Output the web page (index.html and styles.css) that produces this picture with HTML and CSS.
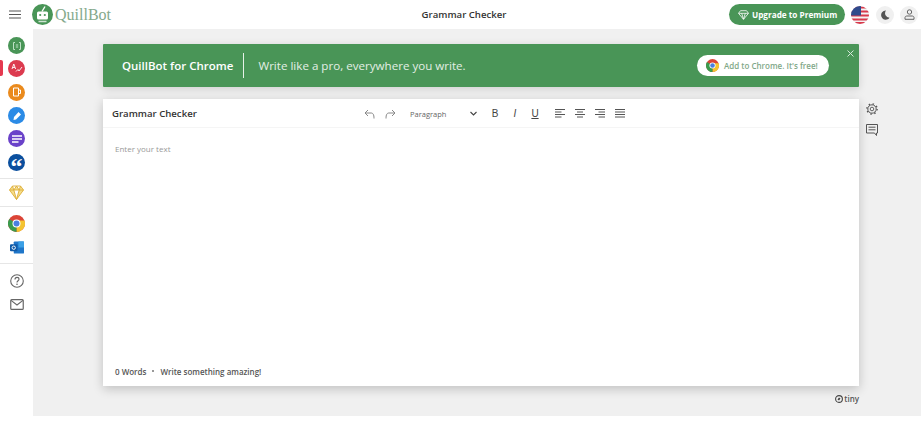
FILE: index.html
```html
<!DOCTYPE html>
<html lang="en">
<head>
    <meta charset="UTF-8">
    <title>Grammar Checker</title>
    <link rel="stylesheet" href="styles.css">
</head>
<body>
    <header class="topbar">
        <div class="brand">
            <svg class="hamburger" width="12" height="9" viewBox="0 0 12 9"><path d="M0 1h12M0 4.500h12M0 8h12" stroke="#555" stroke-width="1.200"/></svg>
            <svg class="logo" width="21" height="21" viewBox="0 0 21 21">
                <circle cx="10.500" cy="10.500" r="10.500" fill="#499557"/>
                <rect x="5" y="7.500" width="11" height="8" rx="1.500" fill="#fff"/>
                <circle cx="8.200" cy="11" r="1.100" fill="#499557"/>
                <circle cx="12.800" cy="11" r="1.100" fill="#499557"/>
                <path d="M10 7.500 13 2.500" stroke="#fff" stroke-width="1.400"/>
                <path d="M6.500 17.500h8" stroke="#cfe3d3" stroke-width="1.500"/>
            </svg>
            <span class="logo-text">QuillBot</span>
        </div>
        <div class="page-title">Grammar Checker</div>
        <div class="top-actions">
            <div class="upgrade">
                <svg width="11" height="10" viewBox="0 0 11 10"><path d="M2.500.700h6l2 2.600-5 6-5-6zM.600 3.300h9.800M3.700 3.300l1.800 6 1.800-6" fill="none" stroke="#fff" stroke-width=".800"/></svg>
                <span>Upgrade to Premium</span>
            </div>
            <svg class="flag" width="18" height="18" viewBox="0 0 18 18">
                <defs><clipPath id="flagclip"><circle cx="9" cy="9" r="9"/></clipPath></defs>
                <g clip-path="url(#flagclip)">
                    <rect width="18" height="18" fill="#f3f3f3"/>
                    <path d="M0 1.500h18M0 5.500h18M0 9.500h18M0 13.500h18M0 17h18" stroke="#d8394c" stroke-width="2"/>
                    <rect width="10" height="9.500" fill="#2f4a8c"/>
                </g>
            </svg>
            <div class="round-btn">
                <svg width="10" height="10" viewBox="0 0 10 10"><path d="M6 .500a4.600 4.600 0 1 0 3.500 7.200A4.500 4.500 0 0 1 6 .500z" fill="#555"/></svg>
            </div>
            <div class="round-btn">
                <svg width="11" height="11" viewBox="0 0 11 11"><circle cx="5.500" cy="3" r="2.200" fill="none" stroke="#666"/><path d="M1 10.300V8.500c0-1 1-1.500 2-1.500h5c1 0 2 .5 2 1.500v1.800z" fill="none" stroke="#666"/></svg>
            </div>
        </div>
    </header>

    <div class="layout">
        <aside class="sidebar">
            <div class="side-group first">
                <div class="side-item"><span class="dot green"><svg width="10" height="10" viewBox="0 0 10 10"><path d="M3 1.500H1.500v7H3M7 1.500h1.500v7H7M3.800 4h2.400M3.800 6h2.400" fill="none" stroke="#bfe0c6"/></svg></span></div>
                <div class="side-item active"><span class="dot red"><svg width="12" height="11" viewBox="0 0 12 11"><path d="M1 6 2.800 1 4.600 6M1.700 4.500h2.200M5 8.500 7 6.500 8 8 11 4" fill="none" stroke="#fff" stroke-width=".900"/></svg></span></div>
                <div class="side-item"><span class="dot orange"><svg width="10" height="10" viewBox="0 0 10 10"><path d="M1.500 1h5v8h-5zM6.500 3h2v3.500h-2" fill="none" stroke="#fff" stroke-width="1"/></svg></span></div>
                <div class="side-item"><span class="dot blue"><svg width="10" height="10" viewBox="0 0 10 10"><path d="M6.500 1 9 3.500 4 8.500 1.500 9 2 6z" fill="#fff"/></svg></span></div>
                <div class="side-item"><span class="dot purple"><svg width="10" height="8" viewBox="0 0 10 8"><path d="M0 1h10M0 4h10M0 7h6.500" stroke="#fff" stroke-width="1.300"/></svg></span></div>
                <div class="side-item"><span class="dot navy quote">“</span></div>
            </div>
            <div class="side-group single">
                <div class="side-item">
                    <svg width="15" height="15" viewBox="0 0 15 15"><path d="M3.500 1h8l3 4-7 9.500L.5 5zM.5 5h14M4.800 5l2.700 9.500L10.200 5M3.500 1l1.300 4 2.700-4 2.700 4 1.300-4" fill="#f6dd8a" stroke="#dcae38" stroke-width=".900"/></svg>
                </div>
            </div>
            <div class="side-group">
                <div class="side-item">
                    <svg width="17" height="17" viewBox="0 0 17 17">
                        <circle cx="8.500" cy="8.500" r="8.500" fill="#db4437"/>
                        <path d="M8.500 8.500V17A8.500 8.500 0 0 0 16.500 5.500H8.500z" fill="#f4c430"/>
                        <path d="M8.500 8.500 1.300 4A8.500 8.500 0 0 0 8.500 17z" fill="#3a9b4d"/>
                        <circle cx="8.500" cy="8.500" r="4" fill="#fff"/>
                        <circle cx="8.500" cy="8.500" r="3" fill="#4a7fe0"/>
                    </svg>
                </div>
                <div class="side-item">
                    <svg width="14" height="13" viewBox="0 0 15 13">
                        <rect x="4" y="0" width="11" height="13" rx="1" fill="#1f76c9"/>
                        <rect x="9" y="0" width="6" height="6.500" fill="#3ba0e6"/>
                        <rect x="0" y="3" width="8" height="7.500" rx="1" fill="#0f5aa8"/>
                        <circle cx="4" cy="6.700" r="1.800" fill="none" stroke="#fff"/>
                    </svg>
                </div>
            </div>
            <div class="side-group last">
                <div class="side-item">
                    <svg width="14" height="14" viewBox="0 0 14 14"><circle cx="7" cy="7" r="6.300" fill="none" stroke="#666" stroke-width="1.100"/><path d="M5 5.500C5 4 6 3.400 7 3.400s2 .7 2 1.900C9 6.800 7 6.800 7 8.500" fill="none" stroke="#666" stroke-width="1.100"/><circle cx="7" cy="10.300" r=".800" fill="#666"/></svg>
                </div>
                <div class="side-item">
                    <svg width="14" height="11" viewBox="0 0 15 12"><rect x=".7" y=".7" width="13.600" height="10.600" rx="1" fill="none" stroke="#666" stroke-width="1.300"/><path d="M1 1.500 7.500 6.500 14 1.500" fill="none" stroke="#666" stroke-width="1.200"/></svg>
                </div>
            </div>
        </aside>

        <main class="content">
            <section class="banner">
                <span class="banner-name">QuillBot for Chrome</span>
                <span class="banner-tagline">Write like a pro, everywhere you write.</span>
                <div class="banner-btn">
                    <svg width="13" height="13" viewBox="0 0 17 17">
                        <circle cx="8.500" cy="8.500" r="8.500" fill="#db4437"/>
                        <path d="M8.500 8.500V17A8.500 8.500 0 0 0 16.500 5.500H8.500z" fill="#f4c430"/>
                        <path d="M8.500 8.500 1.300 4A8.500 8.500 0 0 0 8.500 17z" fill="#3a9b4d"/>
                        <circle cx="8.500" cy="8.500" r="4" fill="#fff"/>
                        <circle cx="8.500" cy="8.500" r="3" fill="#4a7fe0"/>
                    </svg>
                    <span>Add to Chrome. It's free!</span>
                </div>
                <svg class="banner-close" width="7" height="7" viewBox="0 0 7 7"><path d="M.5.500l6 6M6.500.500l-6 6" stroke="#d5e8d9"/></svg>
            </section>

            <div class="editor-row">
                <section class="editor">
                    <div class="toolbar">
                        <span class="editor-title">Grammar Checker</span>
                        <div class="tools">
                            <svg class="tool" width="11" height="10" viewBox="0 0 11 10"><path d="M4 1 1 4l3 3M1 4h6c2 0 3 1.500 3 5.500" fill="none" stroke="#888"/></svg>
                            <svg class="tool" width="11" height="10" viewBox="0 0 11 10"><path d="M7 1l3 3-3 3M10 4H4C2 4 1 5.500 1 9.500" fill="none" stroke="#888"/></svg>
                            <div class="para-select">
                                <span>Paragraph</span>
                                <svg width="7" height="5" viewBox="0 0 7 5"><path d="M.5 1l3 3 3-3" fill="none" stroke="#444" stroke-width="1.100"/></svg>
                            </div>
                            <span class="fmt bold">B</span>
                            <span class="fmt italic">I</span>
                            <span class="fmt underline">U</span>
                            <div class="aligns">
                                <svg width="10" height="9" viewBox="0 0 10 9"><path d="M0 .5h10M0 3h6.500M0 5.500h10M0 8h6.500" stroke="#555"/></svg>
                                <svg width="10" height="9" viewBox="0 0 10 9"><path d="M0 .5h10M2 3h6M0 5.500h10M2 8h6" stroke="#555"/></svg>
                                <svg width="10" height="9" viewBox="0 0 10 9"><path d="M0 .5h10M3.500 3H10M0 5.500h10M3.500 8H10" stroke="#555"/></svg>
                                <svg width="10" height="9" viewBox="0 0 10 9"><path d="M0 .5h10M0 3h10M0 5.500h10M0 8h10" stroke="#555"/></svg>
                            </div>
                        </div>
                    </div>
                    <div class="editor-body">Enter your text</div>
                    <div class="editor-foot">
                        <span>0 Words</span>
                        <span class="sep"></span>
                        <span>Write something amazing!</span>
                    </div>
                </section>
                <div class="side-tools">
                    <svg width="12" height="12" viewBox="0 0 12 12"><circle cx="6" cy="6" r="1.800" fill="none" stroke="#555" stroke-width=".9"/><circle cx="6" cy="6" r="4.200" fill="none" stroke="#555" stroke-width="1"/><circle cx="6" cy="6" r="5.200" fill="none" stroke="#555" stroke-width="1.300" stroke-dasharray="1.500 2.580"/></svg>
                    <svg width="12" height="12" viewBox="0 0 12 12"><path d="M.5.500h11v8.500h-1v2.500l-2-2.500H.5z" fill="none" stroke="#555"/><path d="M2.500 3.200h7M2.500 5.800h7" stroke="#555"/></svg>
                </div>
            </div>

            <div class="powered">
                <svg width="8" height="8" viewBox="0 0 8 8"><circle cx="4" cy="4" r="3.400" fill="none" stroke="#444" stroke-width="1.100"/><path d="M2.500 4.500 4 2.500 5.500 3.500 4 5.500z" fill="#444"/></svg>
                <span>tiny</span>
            </div>
        </main>
    </div>
</body>
</html>
```

FILE: styles.css
```css
* {
    box-sizing: border-box;
}
body {
    margin: 0;
    height: 443px;
    overflow: hidden;
    background-color: #fff;
    font-family: "Open Sans", sans-serif;
    color: #333;
}
svg {
    display: block;
    flex-shrink: 0;
}
.topbar {
    height: 29px;
    display: grid;
    grid-template-columns: 1fr auto 1fr;
    align-items: center;
    background-color: #fff;
}
.brand {
    display: flex;
    align-items: center;
    padding-left: 9px;
}
.logo {
    margin-left: 11px;
}
.logo-text {
    margin-left: 2px;
    font-family: "Liberation Serif", serif;
    font-size: 16px;
    color: #85a98c;
}
.page-title {
    padding-left: 7px;
    font-size: 9.600px;
    font-weight: 600;
    color: #333;
}
.top-actions {
    display: flex;
    align-items: center;
    justify-content: flex-end;
    padding-right: 3px;
}
.upgrade {
    width: 116px;
    height: 21px;
    border-radius: 11px;
    background-color: #499557;
    color: #fff;
    font-size: 8.200px;
    font-weight: 700;
    display: flex;
    align-items: center;
    padding-left: 9px;
    gap: 3px;
}
.flag {
    margin-left: 6px;
    margin-right: 1px;
}
.round-btn {
    width: 18px;
    height: 18px;
    border-radius: 50%;
    background-color: #f0f0f0;
    display: flex;
    align-items: center;
    justify-content: center;
    margin-left: 6px;
}
.layout {
    display: flex;
    height: 387px;
}
.sidebar {
    width: 33px;
    flex-shrink: 0;
    background-color: #fff;
}
.side-group {
    padding: 5px 0 4px;
    border-bottom: 1px solid #e6e6e6;
}
.side-group.first {
    padding-top: 5px;
    padding-bottom: 4px;
}
.side-group.single {
    padding: 2px 0;
}
.side-group.last {
    padding-top: 6px;
    border-bottom: none;
}
.side-item {
    height: 23.300px;
    display: flex;
    align-items: center;
    justify-content: center;
    position: relative;
}
.side-item.active::before {
    content: "";
    position: absolute;
    left: 0;
    top: 3px;
    width: 3px;
    height: 16px;
    border-radius: 0 2px 2px 0;
    background-color: #e53950;
}
.dot {
    width: 17px;
    height: 17px;
    border-radius: 50%;
    display: flex;
    align-items: center;
    justify-content: center;
}
.dot.green { background-color: #499557; }
.dot.red { background-color: #dc3b4f; }
.dot.orange { background-color: #ea8a1d; }
.dot.blue { background-color: #2b8be6; }
.dot.purple { background-color: #6a42c9; }
.dot.navy { background-color: #0b4f9e; }
.quote {
    color: #fff;
    font-family: "Liberation Serif", serif;
    font-size: 24px;
    font-weight: 700;
    line-height: 17px;
    padding-top: 9px;
}
.content {
    flex: 1;
    background-color: #f0f0f0;
    padding: 15px 0 0 70px;
}
.banner {
    width: 756px;
    height: 43px;
    background-color: #499557;
    box-shadow: 0 2px 8px rgba(0, 0, 0, 0.14);
    border-radius: 1px;
    display: flex;
    align-items: center;
    padding-left: 19px;
    position: relative;
    color: #fff;
}
.banner-name {
    font-size: 11.500px;
    font-weight: 600;
    padding-right: 10px;
    line-height: 25px;
    border-right: 1px solid #e6f1e8;
}
.banner-tagline {
    margin-left: 14px;
    font-size: 11.600px;
    color: #e3efe5;
}
.banner-btn {
    margin-left: auto;
    margin-right: 30px;
    width: 132px;
    height: 21px;
    border-radius: 11px;
    background-color: #fff;
    display: flex;
    align-items: center;
    padding-left: 9px;
    gap: 5px;
    font-size: 8px;
    font-weight: 600;
    color: #7fa888;
}
.banner-close {
    position: absolute;
    top: 6px;
    right: 5px;
}
.editor-row {
    display: flex;
    margin-top: 12px;
}
.editor {
    width: 756px;
    height: 287px;
    background-color: #fff;
    box-shadow: 0 3px 10px rgba(0, 0, 0, 0.2);
    display: flex;
    flex-direction: column;
}
.toolbar {
    height: 29px;
    flex-shrink: 0;
    display: flex;
    align-items: center;
    border-bottom: 1px solid #f5f5f5;
    padding-left: 9px;
}
.editor-title {
    width: 252px;
    font-size: 9.600px;
    font-weight: 600;
    color: #333;
}
.tools {
    display: flex;
    align-items: center;
    padding-top: 1px;
}
.tool + .tool {
    margin-left: 10px;
}
.para-select {
    display: flex;
    align-items: center;
    justify-content: space-between;
    width: 67px;
    margin-left: 14px;
    font-size: 7.500px;
    color: #666;
}
.fmt {
    width: 20px;
    text-align: center;
    font-size: 10px;
    color: #444;
    font-family: "Liberation Sans", sans-serif;
}
.para-select + .fmt {
    margin-left: 8px;
}
.fmt.bold {
    font-weight: 400;
}
.fmt.italic {
    font-style: italic;
}
.fmt.underline {
    text-decoration: underline;
}
.aligns {
    display: flex;
    gap: 10px;
    margin-left: 10px;
}
.editor-body {
    flex: 1;
    padding: 15px 12px;
    font-size: 8px;
    color: #999;
}
.editor-foot {
    height: 30px;
    padding-left: 12px;
    display: flex;
    align-items: center;
    gap: 5px;
    font-size: 8px;
    font-weight: 600;
    color: #555;
}
.sep {
    width: 2px;
    height: 2px;
    margin: 0 1px;
    border-radius: 50%;
    background-color: #777;
}
.side-tools {
    margin-left: 7px;
    padding-top: 4px;
    display: flex;
    flex-direction: column;
    gap: 9px;
}
.powered {
    width: 756px;
    margin-top: 7px;
    display: flex;
    justify-content: flex-end;
    align-items: center;
    gap: 1px;
    font-size: 8px;
    font-weight: 600;
    color: #555;
}
```
